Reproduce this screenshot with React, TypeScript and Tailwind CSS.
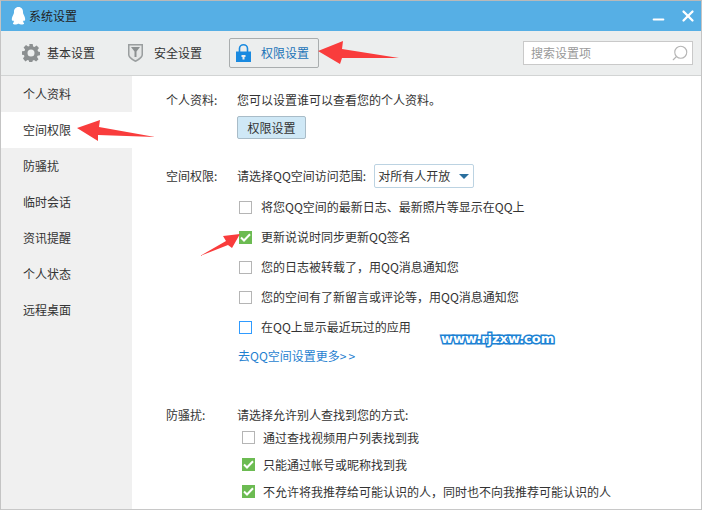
import { Minus, Search, X } from 'lucide-react';

const sideItems = ['个人资料', '空间权限', '防骚扰', '临时会话', '资讯提醒', '个人状态', '远程桌面'];

function QqLogo() {
  return (
    <svg width="15" height="18" viewBox="0 0 16 20" fill="#fff">
      <path d="M8 0C4.6 0 3 2.6 3 5.6c0 1.2-.2 1.8-.7 2.8C1.2 10.500 .4 12.600 .6 14.500c.1 1 .7 1.100 1.400 .2.300 .8 .7 1.500 1.300 2.100-1 .4-1.600 1-1.500 1.600.2 .9 2 1.200 3.400 1 1-.1 1.800-.5 2.300-.8h1c.5 .3 1.300 .7 2.300 .8 1.400 .2 3.200-.1 3.400-1 .1-.6-.5-1.200-1.500-1.600 .6-.6 1-1.300 1.300-2.100 .7 .9 1.300 .8 1.400-.2.200-1.900-.6-4-1.700-6.100-.5-1-.7-1.600-.7-2.800C13 2.600 11.400 0 8 0z" />
    </svg>
  );
}

function Gear() {
  return (
    <svg width="18" height="18" viewBox="0 0 18 18">
      <path
        fill="#8c9091"
        fillRule="evenodd"
        d="M7.300 0h3.400l.4 2.500 1.400.6 2.100-1.500 2.400 2.400-1.500 2.100.6 1.400 2 .4v3.400l-2.500.4-.6 1.400 1.500 2.100-2.400 2.400-2.100-1.500-1.400.6-.4 2.300H7.300l-.4-2.500-1.400-.6-2.100 1.500L1 14.400l1.500-2.100-.6-1.400-1.900-.2V7.300l2.500-.4.6-1.400L1.600 3.400 4 1 6.100 2.500l1.400-.6zM9 5.500a3.500 3.500 0 1 0 0 7 3.500 3.500 0 0 0 0-7z"
      />
    </svg>
  );
}

function Shield() {
  return (
    <svg width="15" height="18" viewBox="0 0 15 18">
      <path fill="#9a9e9f" d="M0 0h15v10.500c0 3.500-4.500 6-7.500 7.500C4.500 16.500 0 14 0 10.500z" />
      <path fill="#e4e6e6" d="M1.500 1.500h12v9c0 2.500-3.800 4.500-6 5.700-2.200-1.200-6-3.200-6-5.700z" />
      <path fill="#8c9091" d="M3 3h9L8.500 7.500V13h-2V7.500z" />
    </svg>
  );
}

function Lock() {
  return (
    <svg width="15" height="18" viewBox="0 0 15 18">
      <path fill="none" stroke="#1a8ae0" strokeWidth="1.6" d="M3.500 8V4.500a4 3.700 0 0 1 8 0V8" />
      <path fill="#1a8ae0" fillRule="evenodd" d="M0 7.500h15V18H0zM5.500 11h4v2H8.500v2.500h-2V13H5.500z" />
    </svg>
  );
}

function Arrow({ className, points }: { className: string; points: string }) {
  return (
    <svg className={`absolute ${className}`} width="82" height="50" viewBox="0 0 82 50">
      <polygon fill="#f93c3c" points={points} />
    </svg>
  );
}

function Check({ checked, blue, label }: { checked?: boolean; blue?: boolean; label: string }) {
  return (
    <label className="flex h-[30px] items-center">
      {checked ? (
        <span className="flex h-[13px] w-[13px] items-center justify-center bg-[#6cbb52]">
          <svg width="11" height="9" viewBox="0 0 11 9">
            <path d="M1 4.500 4 7.500 10 1.200" fill="none" stroke="#fff" strokeWidth="2" />
          </svg>
        </span>
      ) : blue ? (
        <span className="h-[13px] w-[13px] border border-[#2f9bff] bg-white" />
      ) : (
        <span className="h-[13px] w-[13px] border border-[#b5b5b5] bg-white" />
      )}
      <span className="ml-[9px] text-[#333]">{label}</span>
    </label>
  );
}

export default function App() {
  return (
    <div
      className="flex h-[510px] w-[702px] flex-col overflow-hidden border-t border-l border-r border-t-[#b9b9b9] border-l-[#c4c4c4] border-r-[#c4c4c4] bg-white text-xs"
      style={{ fontFamily: '"Noto Sans CJK SC", "Liberation Sans", sans-serif' }}
    >
      <header className="flex h-[30px] shrink-0 items-center bg-[#56afe5] pl-[10px] pr-[4px]">
        <QqLogo />
        <span className="ml-[3px] text-[#222]">系统设置</span>
        <Minus className="ml-auto mt-[6px] text-white" size={17} strokeWidth={2.500} />
        <X className="ml-[12px] text-white" size={18} strokeWidth={3} />
      </header>

      <nav className="flex h-[45px] shrink-0 items-center border-b border-[#d2d4d4] bg-[#eceeee] pl-[21px] pr-[8px] text-[#333]">
        <Gear />
        <span className="ml-[7px]">基本设置</span>
        <span className="ml-[33px]"><Shield /></span>
        <span className="ml-[11px]">安全设置</span>
        <button
          type="button"
          className="ml-[27px] flex h-[30px] w-[90px] items-center rounded-[2px] border border-[#a9adae] pl-[6px] text-[#1b74b8]"
        >
          <Lock />
          <span className="ml-[10px]">权限设置</span>
        </button>
        <div className="ml-auto flex h-[24px] w-[170px] items-center justify-between border border-[#c9c9c9] bg-white pl-[7px] pr-[3px] text-[#999]">
          搜索设置项
          <Search className="-scale-x-100" size={18} color="#b5b5b5" strokeWidth={1.5} />
        </div>
      </nav>

      <div className="flex min-h-0 flex-1">
        <aside className="w-[131px] shrink-0 bg-[#f0f0f0]">
          {sideItems.map((item) => (
            <div
              key={item}
              className={`flex h-[36px] items-center pl-[22px] text-[#333] ${item === '空间权限' ? 'bg-white' : ''}`}
            >
              {item}
            </div>
          ))}
        </aside>

        <main className="flex-1 pl-[34px] pt-[15px] text-[#333]">
          <div className="flex h-[18px] items-center">
            <span className="w-[71px]">个人资料:</span>
            <span>您可以设置谁可以查看您的个人资料。</span>
          </div>
          <button
            type="button"
            className="ml-[71px] mt-[7px] block h-[23px] w-[69px] rounded-[2px] border border-[#a9bcc8] bg-[#cfe8f6]"
          >
            权限设置
          </button>

          <div className="mt-[25px] flex h-[24px] items-center">
            <span className="w-[71px]">空间权限:</span>
            <span>请选择QQ空间访问范围:</span>
            <span className="ml-[8px] flex h-[24px] w-[100px] items-center rounded-[2px] border border-[#bcd3e2] pl-[3px]">
              对所有人开放
              <span className="ml-[9px] h-0 w-0 border-x-[5px] border-t-[5px] border-x-transparent border-t-[#2a6f9e]" />
            </span>
          </div>
          <div className="ml-[73px] mt-[4px]">
            <Check label="将您QQ空间的最新日志、最新照片等显示在QQ上" />
            <Check checked label="更新说说时同步更新QQ签名" />
            <Check label={'您的日志被转载了\uFF0C用QQ消息通知您'} />
            <Check label={'您的空间有了新留言或评论等\uFF0C用QQ消息通知您'} />
            <Check blue label="在QQ上显示最近玩过的应用" />
          </div>
          <a className="ml-[72px] mt-[6px] block text-[#1f7fd0]">
            去QQ空间设置更多<span className="tracking-[2px]">&gt;&gt;</span>
          </a>

          <div className="mt-[42px] flex h-[18px] items-center">
            <span className="w-[71px]">防骚扰:</span>
            <span>请选择允许别人查找到您的方式:</span>
          </div>
          <div className="ml-[76px] [&>label]:h-[27px] [&>label>span:last-child]:ml-[8px]">
            <Check label="通过查找视频用户列表找到我" />
            <Check checked label="只能通过帐号或昵称找到我" />
            <Check checked label={'不允许将我推荐给可能认识的人\uFF0C同时也不向我推荐可能认识的人'} />
          </div>
        </main>
      </div>

      <div className="h-[1px] shrink-0 bg-[#c8c8c8]" />

      <Arrow className="left-[318px] top-[38px]" points="0,13 25,3 24,11 81,20 24,20 22,26" />
      <Arrow className="left-[77px] top-[116px]" points="0,12 23,4 22,11 78,21 21,19 21,25" />
      <Arrow className="left-[200px] top-[231px]" points="0,25 26,10 23,5 40,3 32,17 28,14" />
      <span
        className="absolute left-[441px] top-[330px] text-[13px] font-bold text-white"
        style={{ fontFamily: '"DejaVu Sans", sans-serif', WebkitTextStroke: '3px #1c82d4', paintOrder: 'stroke fill' }}
      >
        www.rjzxw.com
      </span>
    </div>
  );
}
